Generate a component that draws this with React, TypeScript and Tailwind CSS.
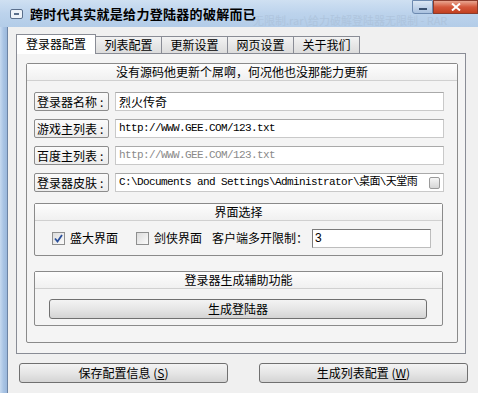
import React from 'react';

const cjk = "font-['Noto_Sans_CJK_SC','Noto_Sans',sans-serif]";
const mono = "font-['Liberation_Mono','Noto_Sans_CJK_SC',monospace] text-[11px] tracking-[-0.6px]";

function Label({ text }: { text: string }) {
    return (
        <div className="w-[75px] h-[19px] shrink-0 border border-[#8c8c8c] rounded-[2px] bg-gradient-to-b from-[#fbfbfb] to-[#ececec] flex items-center pl-[2px] text-[12px] leading-none text-black whitespace-nowrap overflow-hidden">
            {text}
            <span className="ml-[3px]">:</span>
        </div>
    );
}

function Field({ value, muted, extra }: { value: string; muted?: boolean; extra?: boolean }) {
    return (
        <div className="ml-[6px] w-[329px] h-[19px] border border-[#c9c9c9] border-t-[#a9a9a9] bg-white flex items-center pl-[3px] pr-[3px] overflow-hidden">
            <span className={`${mono} leading-none whitespace-nowrap ${muted ? 'text-[#8a8a8a]' : 'text-black'}`}>{value}</span>
            {extra && <span className="ml-auto shrink-0 w-[11px] h-[12px] border border-[#9a9a9a] rounded-[2px] bg-gradient-to-b from-[#f6f6f6] to-[#d6d6d6]" />}
        </div>
    );
}

function Check({ checked }: { checked?: boolean }) {
    return (
        <span className="w-[13px] h-[13px] border border-[#8e8f8f] bg-gradient-to-br from-[#dcdcdc] to-[#fbfbfb] flex items-center justify-center">
            {checked && (
                <svg width="9" height="9" viewBox="0 0 9 9">
                    <path d="M1 4.5 L3.5 7.5 L8 1" stroke="#2a4f9a" strokeWidth="1.8" fill="none" />
                </svg>
            )}
        </span>
    );
}

function GroupHeader({ text }: { text: string }) {
    return (
        <div className="h-[17px] flex items-center justify-center bg-gradient-to-b from-[#fdfdfd] to-[#f0f0f0] border-b border-[#d0d0d0] text-[12px] leading-none">
            {text}
        </div>
    );
}

function Button({ children, className }: { children: React.ReactNode; className?: string }) {
    return (
        <div className={`h-[20px] border border-[#707070] rounded-[3px] bg-gradient-to-b from-[#f3f3f3] via-[#e6e6e6] to-[#d4d4d4] flex items-center justify-center text-[12px] leading-none text-black ${className || ''}`}>
            {children}
        </div>
    );
}

export default function App() {
    const tabs = ['列表配置', '更新设置', '网页设置', '关于我们'];
    return (
        <div className={`w-[478px] h-[393px] relative overflow-hidden bg-[#f0f0f0] ${cjk}`}>
            {/* Title bar */}
            <div className="h-[27px] bg-gradient-to-b from-[#cfe0f2] via-[#bcd3ec] to-[#b3cce8] flex items-center pl-[10px] relative">
                <span className="w-[13px] h-[10px] border border-[#5a6f8c] rounded-[2px] bg-[#eef3f9] flex items-center justify-center">
                    <span className="w-[5px] h-[2px] bg-[#5a6f8c]" />
                </span>
                <span className="ml-[7px] text-[13px] font-bold leading-none text-black tracking-[0.3px]">跨时代其实就是给力登陆器的破解而已</span>
                <span className="absolute left-[253px] top-[15px] text-[11px] leading-none text-[#a9bed6] opacity-60 whitespace-nowrap">无限制.rar\给力破解登陆器无限制 - RAR</span>
                <div className="absolute right-0 top-0 flex">
                    <div className="w-[21px] h-[14px] border border-[#6d8ab0] rounded-bl-[3px] bg-gradient-to-b from-[#dbe7f4] to-[#a9c1df] flex items-center justify-center">
                        <span className="w-[8px] h-[2px] bg-[#39506f] mt-[3px]" />
                    </div>
                    <div className="w-[45px] h-[14px] border border-[#8a3b2c] bg-gradient-to-b from-[#e8a590] via-[#d4573b] to-[#c2401f] flex items-center justify-center">
                        <svg width="10" height="8" viewBox="0 0 10 8">
                            <path d="M1 0.5 L9 7.5 M9 0.5 L1 7.5" stroke="#fff" strokeWidth="2" />
                        </svg>
                    </div>
                </div>
            </div>

            <div className="flex h-[366px]">
                {/* left frame */}
                <div className="w-[8px] bg-gradient-to-r from-[#c7daf0] via-[#a9c4e4] to-[#9bb8dc] border-r border-[#6d84a4]" />

                <div className="flex-1 pl-[8px] pt-[6px]">
                    {/* Tabs */}
                    <div className="flex items-end h-[20px] text-[12px] leading-none">
                        <div className="w-[80px] h-[20px] bg-white border border-[#898c95] border-b-0 flex items-center justify-center relative z-10 -mb-px pb-px">
                            登录器配置
                        </div>
                        {tabs.map((t) => (
                            <div key={t} className="w-[67px] h-[17px] -ml-px border border-[#898c95] border-b-0 bg-gradient-to-b from-[#f2f2f2] to-[#dcdcdc] flex items-center justify-center">
                                {t}
                            </div>
                        ))}
                    </div>

                    {/* Tab panel */}
                    <div className="w-[450px] h-[301px] border border-[#898c95] bg-[#f4f4f4] pl-[9px] pt-[9px]">
                        <div className="w-[432px] h-[280px] border border-[#8a8a8a] rounded-[2px]">
                            <GroupHeader text="没有源码他更新个屌啊，何况他也没那能力更新" />
                            <div className="pl-[7px] pt-[11px] flex flex-col gap-[8px]">
                                <div className="flex items-center">
                                    <Label text="登录器名称" />
                                    <div className="ml-[6px] w-[329px] h-[19px] border border-[#c9c9c9] border-t-[#a9a9a9] bg-white flex items-center pl-[3px] text-[12px] leading-none">烈火传奇</div>
                                </div>
                                <div className="flex items-center">
                                    <Label text="游戏主列表" />
                                    <Field value="http://WWW.GEE.COM/123.txt" />
                                </div>
                                <div className="flex items-center">
                                    <Label text="百度主列表" />
                                    <Field value="http://WWW.GEE.COM/123.txt" muted />
                                </div>
                                <div className="flex items-center">
                                    <Label text="登录器皮肤" />
                                    <Field value="C:\Documents and Settings\Administrator\桌面\天堂雨" extra />
                                </div>
                            </div>

                            {/* 界面选择 */}
                            <div className="ml-[7px] mt-[11px] w-[409px] h-[53px] border border-[#8a8a8a] rounded-[2px]">
                                <GroupHeader text="界面选择" />
                                <div className="flex items-center h-[34px] pl-[17px] text-[12px] leading-none">
                                    <Check checked />
                                    <span className="ml-[5px]">盛大界面</span>
                                    <span className="ml-[18px]"><Check /></span>
                                    <span className="ml-[5px]">剑侠界面</span>
                                    <span className="ml-[10px]">客户端多开限制：</span>
                                    <div className="ml-[4px] w-[119px] h-[19px] border border-[#bdbdbd] border-t-[#7a7a7a] border-l-[#7a7a7a] bg-white flex items-center pl-[2px] font-['Liberation_Sans',sans-serif] text-[12px]">3</div>
                                </div>
                            </div>

                            {/* 登录器生成辅助功能 */}
                            <div className="ml-[7px] mt-[15px] w-[409px] h-[55px] border border-[#8a8a8a] rounded-[2px]">
                                <GroupHeader text="登录器生成辅助功能" />
                                <div className="pl-[14px] pt-[10px]">
                                    <Button className="w-[378px]">生成登陆器</Button>
                                </div>
                            </div>
                        </div>
                    </div>

                    {/* Bottom buttons */}
                    <div className="flex mt-[9px] ml-[3px]">
                        <Button className="w-[209px]">保存配置信息 (<span className="underline">S</span>)</Button>
                        <Button className="w-[209px] ml-[31px]">生成列表配置 (<span className="underline">W</span>)</Button>
                    </div>
                </div>
            </div>
        </div>
    );
}
